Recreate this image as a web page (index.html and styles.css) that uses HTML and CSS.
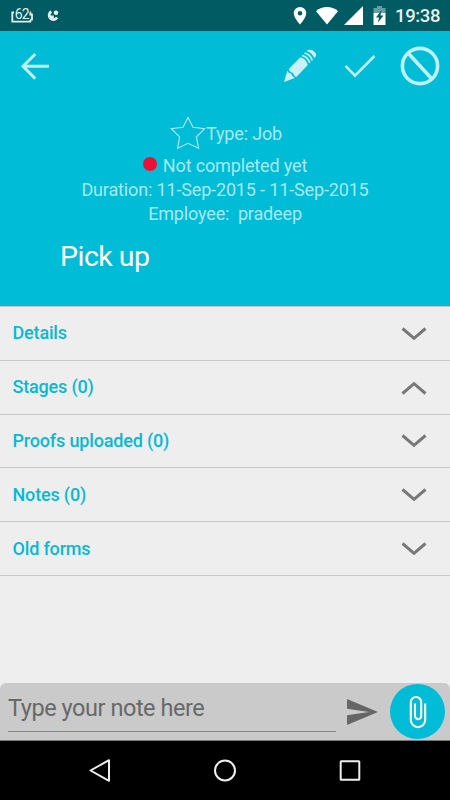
FILE: index.html
```
<!DOCTYPE html>
<html lang="en">
<head>
  <meta charset="UTF-8" />
  <meta name="viewport" content="width=device-width, initial-scale=1.0"/>
  <title>Pick up</title>
  <link rel="stylesheet" href="styles.css">
</head>
<body>
  <div class="screen">
    <div class="status-bar">
      <svg class="status-battery" width="22" height="16" viewBox="0 0 22 16">
        <path d="M3 4.500H1.300v9.200h18v-2h1.700V6.500H19.300v-2h-1" fill="none" stroke="#e4eeef" stroke-width="1.800"/>
        <text x="3.800" y="10.800" class="battery-level">62</text>
      </svg>
      <svg class="status-app" width="12" height="12" viewBox="0 0 12 12">
        <path d="M4.300 1.500a4.300 4.300 0 1 0 5.800 6" fill="none" stroke="#e4eeef" stroke-width="2.800"/>
        <circle cx="9" cy="2.800" r="2.300" fill="#e4eeef"/>
        <path d="M3 5.500h3.800v2.500H3z" fill="#e4eeef"/>
      </svg>
      <svg class="status-pin" width="14" height="18" viewBox="0 0 14 18">
        <path d="M7 0a6.300 6.300 0 0 0-6.300 6.300C.700 11 7 17.500 7 17.500s6.300-6.500 6.300-11.200A6.300 6.300 0 0 0 7 0zm0 4a2.300 2.300 0 1 1 0 4.600a2.300 2.300 0 0 1 0-4.600z" fill="#fff"/>
      </svg>
      <svg class="status-wifi" width="22" height="18" viewBox="0 0 22 18">
        <path d="M0 4.200C6-1.400 16-1.400 22 4.200L11 17.600z" fill="#fff"/>
      </svg>
      <svg class="status-signal" width="19" height="19" viewBox="0 0 19 19">
        <path d="M19 0v19H0z" fill="#fff"/>
      </svg>
      <svg class="status-charge" width="13" height="19" viewBox="0 0 13 19">
        <path d="M4 0h5v2h3.500v5H.500V2H4z" fill="#669da1"/>
        <path d="M.500 7h12v12H.500z" fill="#fff"/>
        <path d="M8.500 4L3 11.500h3L5 16.500l5.500-7H7.500z" fill="#005b63"/>
      </svg>
      <span class="clock">19:38</span>
    </div>

    <div class="toolbar">
      <svg class="back" width="32" height="32" viewBox="0 0 32 32">
        <path d="M29 16.300H3.500M15.300 4L3 16.300l12.300 12.300" fill="none" stroke="#bff0f6" stroke-width="3"/>
      </svg>
      <svg class="edit" width="36" height="34" viewBox="0 0 36 34">
        <path d="M1 33L4.300 21.700Q5.500 24 8.200 24.800Q9 28 11.800 29z" fill="#c9f1f7"/>
        <path d="M5.700 20L17.300 8.200Q23 9.500 24.800 16L13.300 28Q10.800 27 10 24Q6.700 23.300 5.700 20z" fill="#c9f1f7"/>
        <path d="M19 6.500Q25 8 26.800 14M21.500 4Q27.500 5.500 29.300 11.500" fill="none" stroke="#c9f1f7" stroke-width="1.700"/>
        <path d="M23.500 2Q26-.200 29.500 1.300Q33 3.500 33.200 6.300Q32.900 7.800 31.200 9.200Q29 3.500 23.500 2z" fill="#c9f1f7"/>
      </svg>
      <svg class="done" width="34" height="30" viewBox="0 0 34 30">
        <path d="M2.500 14.800l9.500 9.900L31.500 5" fill="none" stroke="#bff0f6" stroke-width="2.500"/>
      </svg>
      <svg class="cancel" width="40" height="40" viewBox="0 0 40 40">
        <circle cx="20" cy="20" r="17.600" fill="none" stroke="#bff0f6" stroke-width="3.600"/>
        <path d="M8.500 7.500l23 25" stroke="#bff0f6" stroke-width="3.600"/>
      </svg>
    </div>

    <div class="summary">
      <div class="line type">
        <svg width="36" height="34" viewBox="0 0 36 34">
          <path d="M18 1.600l5 9.700 11.600 1.300-8.200 8.300 2.200 11.300L18 27.300 7.700 32.200l1.900-11.300-8.200-8.300L13 11.300z" fill="none" stroke="#a6e9f2" stroke-width="1.200"/>
        </svg>
        <span>Type: Job</span>
      </div>
      <div class="line state"><span class="dot"></span><span>Not completed yet</span></div>
      <div class="line">Duration: 11-Sep-2015 - 11-Sep-2015</div>
      <div class="line employee">Employee:&nbsp; pradeep</div>
      <h1>Pick up</h1>
    </div>

    <div class="sections">
      <div class="section">
        <span>Details</span>
        <svg width="26" height="14" viewBox="0 0 26 14"><path d="M1.500 1.500L13 11.300 24.500 1.500"/></svg>
      </div>
      <div class="section">
        <span>Stages (0)</span>
        <svg width="26" height="14" viewBox="0 0 26 14"><path d="M1.500 12.500L13 2.700l11.500 9.800"/></svg>
      </div>
      <div class="section">
        <span>Proofs uploaded (0)</span>
        <svg width="26" height="14" viewBox="0 0 26 14"><path d="M1.500 1.500L13 11.300 24.500 1.500"/></svg>
      </div>
      <div class="section">
        <span>Notes (0)</span>
        <svg width="26" height="14" viewBox="0 0 26 14"><path d="M1.500 1.500L13 11.300 24.500 1.500"/></svg>
      </div>
      <div class="section">
        <span>Old forms</span>
        <svg width="26" height="14" viewBox="0 0 26 14"><path d="M1.500 1.500L13 11.300 24.500 1.500"/></svg>
      </div>
    </div>

    <div class="note-bar">
      <div class="note-input">Type your note here</div>
      <svg class="send" width="31" height="26" viewBox="0 0 31 26">
        <path d="M0 0l31 13L0 26v-9.700L22 13 0 9.700z" fill="#666"/>
      </svg>
      <div class="attach">
        <svg width="24" height="36" viewBox="0 0 24 36">
          <path d="M19.200 9.500v16.500a7.200 7.200 0 0 1-14.400 0V8.200a5.200 5.200 0 0 1 10.400 0V22a3.100 3.100 0 0 1-6.200 0V9.500" fill="none" stroke="#fff" stroke-width="2.100"/>
        </svg>
      </div>
    </div>

    <div class="nav-bar">
      <svg width="24" height="26" viewBox="0 0 24 26">
        <path d="M2.500 12.500L21 2.200v20.600z"/>
      </svg>
      <svg width="24" height="26" viewBox="0 0 24 26">
        <circle cx="12" cy="12.500" r="10"/>
      </svg>
      <svg width="24" height="26" viewBox="0 0 24 26">
        <rect x="2.700" y="3.200" width="18.600" height="18.600" rx=".5"/>
      </svg>
    </div>
  </div>
</body>
</html>
```
FILE: styles.css
```
body {
  margin: 0;
  font-family: Roboto, sans-serif;
  background: #eee;
}
svg {
  display: block;
  flex: none;
}
.screen {
  display: flex;
  flex-direction: column;
  width: 450px;
  height: 800px;
  overflow: hidden;
}
.status-bar {
  display: flex;
  align-items: flex-start;
  box-sizing: border-box;
  height: 31px;
  padding: 0 10px 0 11px;
  background: #005b63;
}
.status-battery {
  margin-top: 8px;
  overflow: visible;
}
.battery-level {
  font-size: 14px;
  letter-spacing: -0.8px;
  fill: #e4eeef;
  stroke: #005b63;
  stroke-width: 2px;
  paint-order: stroke;
}
.status-app {
  margin: 10px 0 0 14px;
}
.status-pin {
  margin: 7px 0 0 auto;
}
.status-wifi {
  margin: 7px 0 0 9px;
}
.status-signal {
  margin: 6px 0 0 6px;
}
.status-charge {
  margin: 6px 0 0 10px;
}
.clock {
  margin-left: 9px;
  line-height: 33px;
  font-size: 18.5px;
  font-weight: 500;
  letter-spacing: -0.4px;
  color: #e6f0f0;
}
.toolbar {
  display: flex;
  align-items: center;
  box-sizing: border-box;
  height: 70px;
  padding: 0 10px 0 20px;
  background: #00bcd7;
}
.edit {
  margin-left: auto;
}
.done {
  margin-left: 24px;
}
.cancel {
  margin-left: 23px;
}
.summary {
  box-sizing: border-box;
  height: 205px;
  padding-top: 14px;
  background: #00bcd7;
  color: #a6e9f2;
  font-size: 18px;
  letter-spacing: -0.15px;
}
.line {
  display: flex;
  align-items: center;
  justify-content: center;
  height: 24px;
}
.type {
  height: 36px;
  padding-left: 2px;
}
.state {
  height: 26px;
  padding-top: 1px;
}
.state .dot {
  width: 14px;
  height: 14px;
  margin: 0 6px 2px 0;
  border-radius: 50%;
  background: #ed1036;
}
.state + .line {
  margin-top: -1px;
}
.summary h1 {
  margin: 14px 0 0 60px;
  font-size: 28.5px;
  line-height: 36px;
  font-weight: 400;
  letter-spacing: -0.5px;
  color: #fff;
}
.sections {
  flex: 1;
  border-top: 1px solid #c4c4c4;
}
.section {
  display: flex;
  align-items: center;
  justify-content: space-between;
  box-sizing: border-box;
  height: 53.8px;
  padding: 0 23.5px 0 12.5px;
  border-bottom: 1px solid #c8c8c8;
  color: #08b9d4;
  font-size: 18px;
  font-weight: 500;
  letter-spacing: -0.17px;
}
.section span {
  padding-bottom: 1px;
}
.section svg {
  margin-top: 1px;
}
.section path {
  fill: none;
  stroke: #787878;
  stroke-width: 3;
}
.note-bar {
  display: flex;
  align-items: center;
  box-sizing: border-box;
  height: 58px;
  padding: 0 5px 0 8px;
  border-bottom: 1px solid #777;
  border-radius: 6px 6px 0 0;
  background: #cacaca;
}
.note-input {
  box-sizing: border-box;
  width: 328px;
  height: 39px;
  margin-top: 1px;
  border-bottom: 1px solid #858585;
  font-size: 23.5px;
  line-height: 30px;
  letter-spacing: -0.45px;
  color: #686868;
}
.send {
  margin-left: 11px;
}
.attach {
  display: flex;
  align-items: center;
  justify-content: center;
  width: 55px;
  height: 55px;
  margin-left: auto;
  border-radius: 50%;
  background: #00bcd7;
}
.nav-bar {
  display: flex;
  justify-content: space-between;
  align-items: center;
  height: 59px;
  padding: 0 88px;
  background: #000;
}
.nav-bar path,
.nav-bar circle,
.nav-bar rect {
  fill: none;
  stroke: #eee;
  stroke-width: 2;
  stroke-linejoin: round;
}
```
